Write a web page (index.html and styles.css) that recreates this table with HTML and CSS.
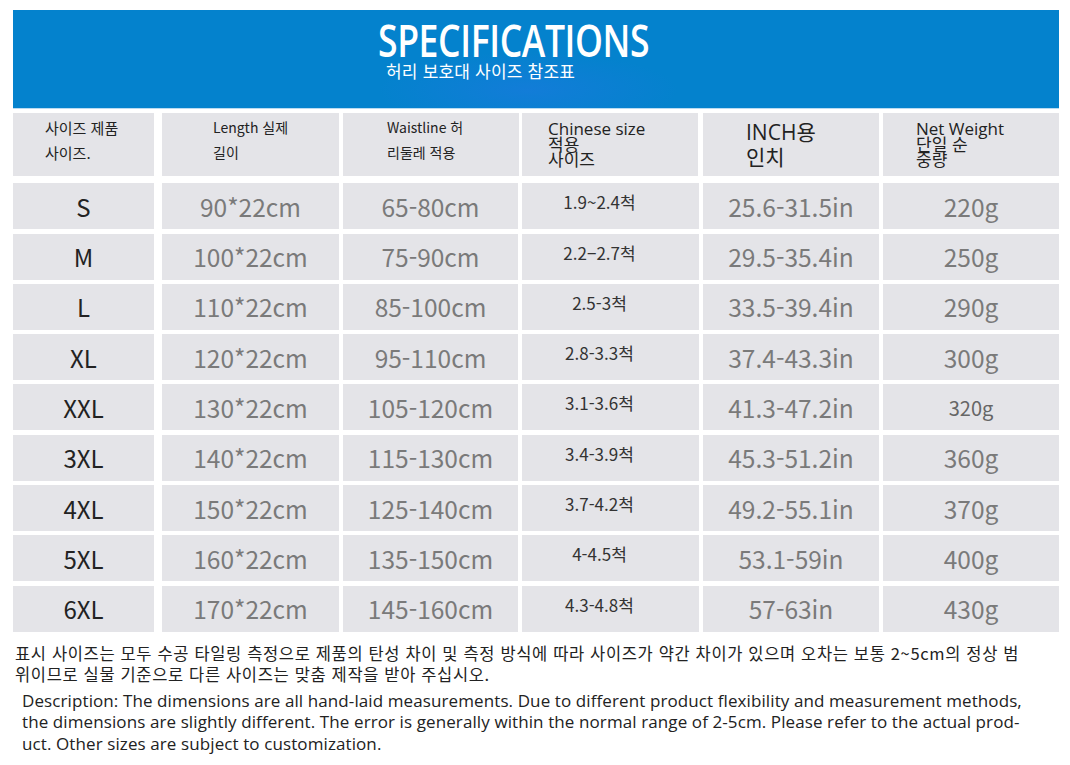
FILE: index.html
```html
<!DOCTYPE html>
<html lang="ko">
<head>
<meta charset="utf-8">
<title>Specifications</title>
<link rel="stylesheet" href="styles.css">
</head>
<body>
<div class="page">
  <header class="banner">
    <div class="banner-inner">
      <h1 class="title">SPECIFICATIONS</h1>
      <p class="subtitle">허리 보호대 사이즈 참조표</p>
    </div>
  </header>

  <div class="table">
    <div class="th th1"><span>사이즈 제품<br>사이즈.</span></div>
    <div class="th th2"><span>Length 실제<br>길이</span></div>
    <div class="th th3"><span>Waistline 허<br>리둘레 적용</span></div>
    <div class="th th4"><span><span class="en">Chinese size</span><br>적용<br>사이즈</span></div>
    <div class="th th5"><span><span class="en">INCH</span>용<br>인치</span></div>
    <div class="th th6"><span><span class="en">Net Weight</span><br>단일 순<br>중량</span></div>

    <div class="td sz">S</div><div class="td">90*22cm</div><div class="td">65-80cm</div><div class="td cn">1.9~2.4척</div><div class="td">25.6-31.5in</div><div class="td">220g</div>
    <div class="td sz">M</div><div class="td">100*22cm</div><div class="td">75-90cm</div><div class="td cn">2.2−2.7척</div><div class="td">29.5-35.4in</div><div class="td">250g</div>
    <div class="td sz">L</div><div class="td">110*22cm</div><div class="td">85-100cm</div><div class="td cn">2.5-3척</div><div class="td">33.5-39.4in</div><div class="td">290g</div>
    <div class="td sz">XL</div><div class="td">120*22cm</div><div class="td">95-110cm</div><div class="td cn">2.8-3.3척</div><div class="td">37.4-43.3in</div><div class="td">300g</div>
    <div class="td sz">XXL</div><div class="td">130*22cm</div><div class="td">105-120cm</div><div class="td cn">3.1-3.6척</div><div class="td">41.3-47.2in</div><div class="td small">320g</div>
    <div class="td sz">3XL</div><div class="td">140*22cm</div><div class="td">115-130cm</div><div class="td cn">3.4-3.9척</div><div class="td">45.3-51.2in</div><div class="td">360g</div>
    <div class="td sz">4XL</div><div class="td">150*22cm</div><div class="td">125-140cm</div><div class="td cn">3.7-4.2척</div><div class="td">49.2-55.1in</div><div class="td">370g</div>
    <div class="td sz">5XL</div><div class="td">160*22cm</div><div class="td">135-150cm</div><div class="td cn">4-4.5척</div><div class="td">53.1-59in</div><div class="td">400g</div>
    <div class="td sz">6XL</div><div class="td">170*22cm</div><div class="td">145-160cm</div><div class="td cn">4.3-4.8척</div><div class="td">57-63in</div><div class="td">430g</div>
  </div>

  <p class="note-ko">표시 사이즈는 모두 수공 타일링 측정으로 제품의 탄성 차이 및 측정 방식에 따라 사이즈가 약간 차이가 있으며 오차는 보통 2~5cm의 정상 범<br>위이므로 실물 기준으로 다른 사이즈는 맞춤 제작을 받아 주십시오.</p>
  <p class="note-en">Description: The dimensions are all hand-laid measurements. Due to different product flexibility and measurement methods,<br>the dimensions are slightly different. The error is generally within the normal range of 2-5cm. Please refer to the actual prod-<br>uct. Other sizes are subject to customization.</p>
</div>
</body>
</html>
```

FILE: styles.css
```css
* { box-sizing: border-box; }
html, body { margin: 0; padding: 0; background: #ffffff; }
body {
  font-family: "Noto Sans CJK KR", "Noto Sans", sans-serif;
  color: #222;
}
.page {
  width: 1070px;
  padding: 10px 11px 0 13px;
}

/* banner */
.banner {
  height: 98px;
  background:
    radial-gradient(ellipse 150px 38px at 515px 80px, rgba(30, 120, 225, 0.55), rgba(30, 120, 225, 0)),
    #0482cd;
  box-shadow: 0 1px 0 #b9dbf1;
}
.banner-inner {
  padding: 10px 0 0 365px;
  display: flex;
  flex-direction: column;
}
.title {
  margin: 0;
  font-family: "Open Sans", "Liberation Sans", sans-serif;
  font-weight: 600;
  font-size: 45px;
  line-height: 40px;
  color: #ffffff;
  letter-spacing: -0.5px;
  transform: scaleX(0.79);
  transform-origin: left center;
  white-space: nowrap;
}
.subtitle {
  margin: 1px 0 0 8px;
  font-size: 17px;
  line-height: 20px;
  color: #ffffff;
  letter-spacing: 0.2px;
}

/* table */
.table {
  margin-top: 5px;
  display: grid;
  grid-template-columns: 149px 181px 179px 181px 180px 176px;
  grid-template-rows: 66px repeat(9, 46px);
  row-gap: 4.3px;
}
.th, .td {
  background: #e4e4e8;
  margin-right: 4px;
}
.th1, .td.sz { margin-right: 8px; }
.table > :nth-child(6n) { margin-right: 0; }
.th:nth-child(3) { margin-right: 3px; }
.th:nth-child(4) { margin-right: 5px; }
.th {
  margin-bottom: 3px;
  font-size: 14px;
  line-height: 25px;
  color: #222;
  padding-top: 2px;
}
.th1 { padding-left: 32px; font-size: 15px; }
.th2 { padding-left: 51px; }
.th3 { padding-left: 44px; }
.th4 { padding-left: 26px; font-size: 17px; line-height: 15px; padding-top: 7px; }
.th5 { padding-left: 43px; font-size: 21px; line-height: 24px; padding-top: 6px; }
.th6 { padding-left: 33px; font-size: 17px; line-height: 15px; padding-top: 7px; }
.en { font-family: "Open Sans", "Noto Sans", sans-serif; }

.td {
  display: flex;
  align-items: center;
  justify-content: center;
  font-size: 24.5px;
  color: #7a7a7a;
}
.td.sz { color: #222; font-size: 24px; }
.td.cn {
  font-size: 17px;
  line-height: 20px;
  color: #333;
  align-items: flex-start;
  padding-top: 9px;
  padding-right: 22px;
}
.td.small { font-size: 20px; color: #666; }

/* notes */
.note-ko {
  margin: 11px 0 0 2px;
  font-size: 16.5px;
  line-height: 21px;
  color: #222;
  white-space: nowrap;
  letter-spacing: 0.65px;
}
.note-en {
  margin: 5px 0 0 9px;
  font-family: "Open Sans", "Noto Sans", sans-serif;
  font-size: 17px;
  line-height: 21.5px;
  color: #222;
  white-space: nowrap;
  letter-spacing: 0.1px;
}
```
